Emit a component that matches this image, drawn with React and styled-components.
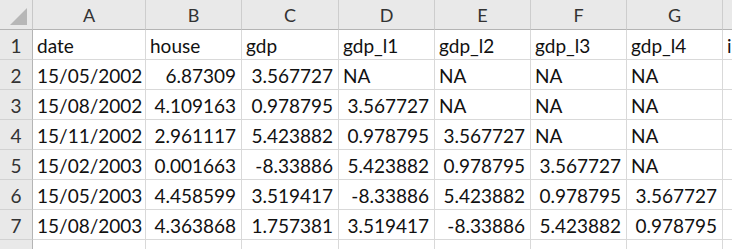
import React from 'react';
import styled, {createGlobalStyle} from 'styled-components';

const GlobalStyle = createGlobalStyle`
html, body {
  margin: 0;
  padding: 0;
  overflow: hidden;
  background: #ffffff;
}
`

const Sheet = styled.div `
display: grid;
grid-template-columns: 33px 113px 96px 97px 96px 96px 96px 96px 96px;
grid-auto-rows: 30px;
width: 732px;
height: 249px;
overflow: hidden;
font-family: Lato, "Open Sans", sans-serif;
font-size: 19px;
color: #111;
`

const Corner = styled.div `
background: #e9e9e9;
border-right: 1px solid #c8c8c8;
border-bottom: 1px solid #b4b4b4;
display: flex;
align-items: flex-end;
justify-content: flex-end;
padding: 0 5px 4px 0;
box-sizing: border-box;
`

const ColHead = styled.div `
background: #e9e9e9;
border-right: 1px solid #cdcdcd;
border-bottom: 1px solid #b4b4b4;
box-sizing: border-box;
text-align: center;
line-height: 30px;
font-size: 18px;
color: #333;
`

const RowHead = styled.div `
background: #e9e9e9;
border-right: 1px solid #b4b4b4;
border-bottom: 1px solid #d2d2d2;
box-sizing: border-box;
text-align: center;
line-height: 30px;
padding-top: 1px;
color: #333;
`

const Cell = styled.div `
border-right: 1px solid #d9d9d9;
border-bottom: 1px solid #d9d9d9;
box-sizing: border-box;
line-height: 30px;
padding: 1px ${p => p.$num ? '5px' : '0'} 0 4px;
text-align: ${p => p.$num ? 'right' : 'left'};
white-space: nowrap;
`

const cols = ['A', 'B', 'C', 'D', 'E', 'F', 'G', 'H'];

const rows = [
  ['date', 'house', 'gdp', 'gdp_l1', 'gdp_l2', 'gdp_l3', 'gdp_l4', 'infl'],
  ['15/05/2002', '6.87309', '3.567727', 'NA', 'NA', 'NA', 'NA', ''],
  ['15/08/2002', '4.109163', '0.978795', '3.567727', 'NA', 'NA', 'NA', ''],
  ['15/11/2002', '2.961117', '5.423882', '0.978795', '3.567727', 'NA', 'NA', ''],
  ['15/02/2003', '0.001663', '-8.33886', '5.423882', '0.978795', '3.567727', 'NA', ''],
  ['15/05/2003', '4.458599', '3.519417', '-8.33886', '5.423882', '0.978795', '3.567727', ''],
  ['15/08/2003', '4.363868', '1.757381', '3.519417', '-8.33886', '5.423882', '0.978795', ''],
  ['', '', '', '', '', '', '', ''],
];

const isNum = v => /^-?[\d./]+$/.test(v);

export default function App() {
  return (
    <>
      <GlobalStyle />
      <Sheet>
        <Corner>
          <svg width="17" height="17" viewBox="0 0 17 17">
            <polygon points="17,0 17,17 0,17" fill="#b7b7b7" />
          </svg>
        </Corner>
        {cols.map(c => <ColHead key={c}>{c}</ColHead>)}
        {rows.map((r, i) => (
          <React.Fragment key={i}>
            <RowHead>{i < 7 ? i + 1 : ''}</RowHead>
            {r.map((v, j) => (
              <Cell key={j} $num={isNum(v)}>{v}</Cell>
            ))}
          </React.Fragment>
        ))}
      </Sheet>
    </>
  )
}
